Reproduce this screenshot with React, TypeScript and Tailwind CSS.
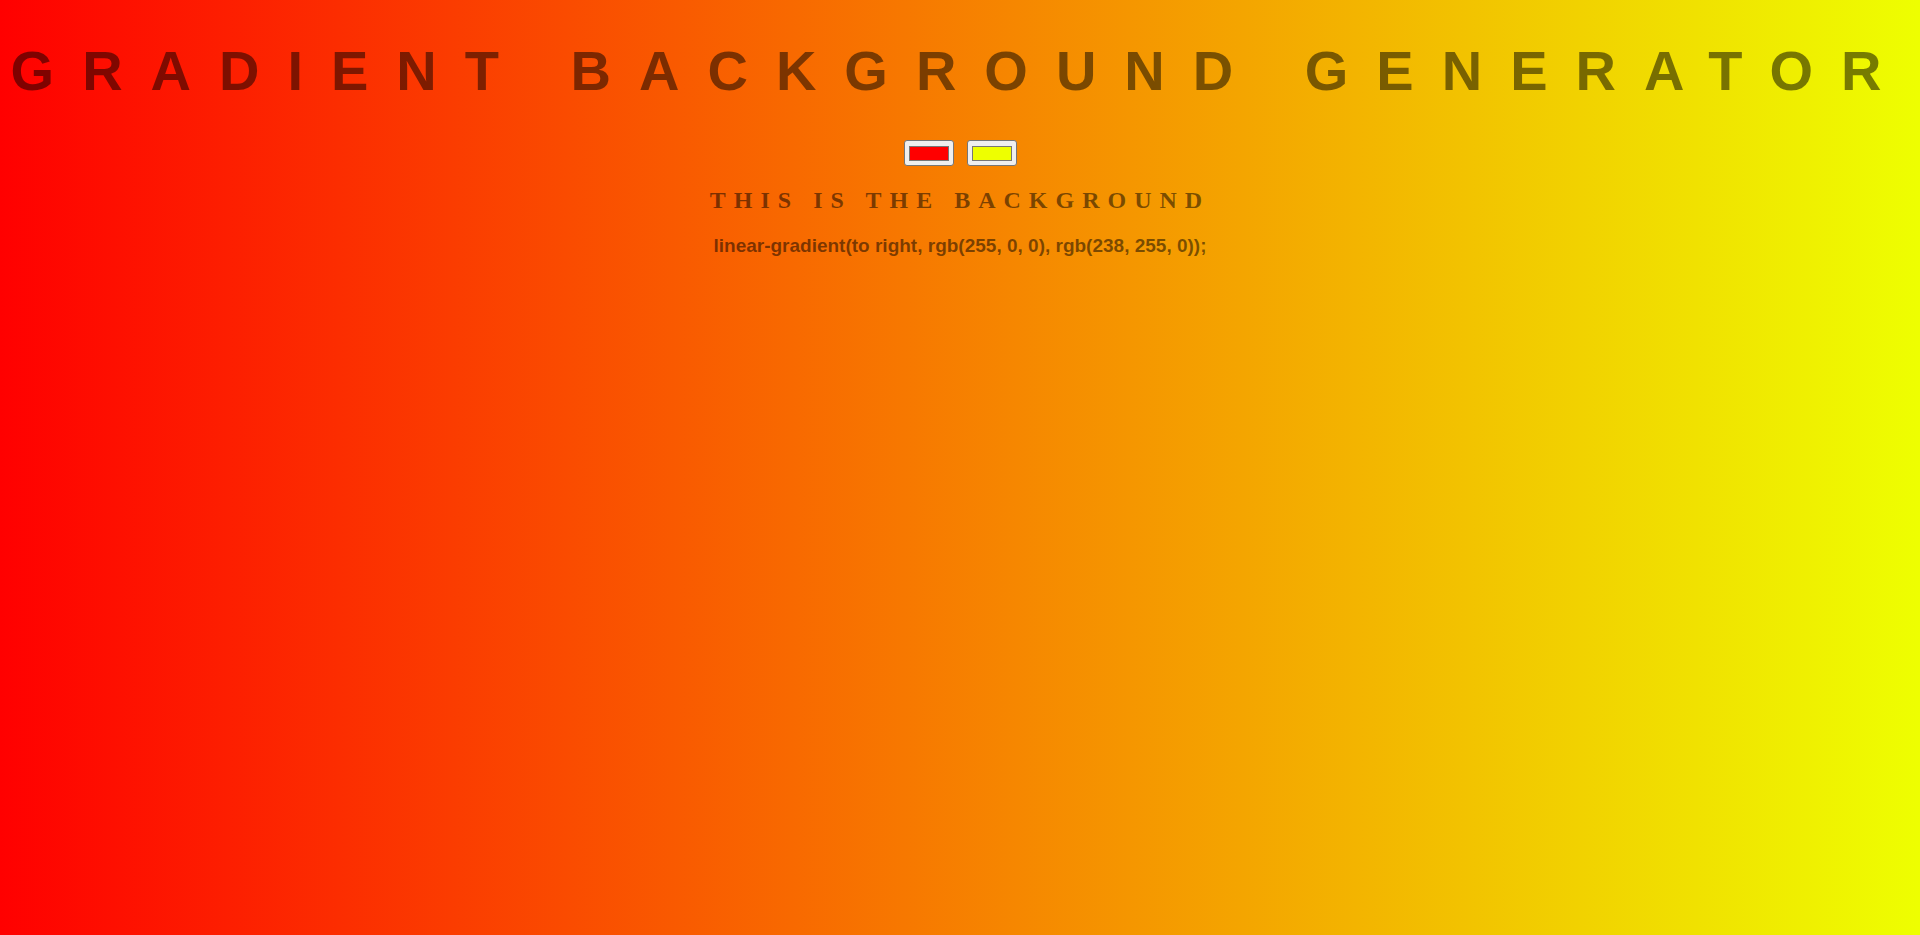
const colors = ["#ff0000", "#eeff00"];

function Swatch({ color }: { color: string }) {
  return (
    <div className="w-[50px] h-[26px] flex items-center justify-center bg-[#efefef] border border-[#767676] rounded-[3px]">
      <div className="w-[40px] h-[15px] border border-[#777777]" style={{ backgroundColor: color }}></div>
    </div>
  );
}

export default function App() {
  return (
    <div className="min-h-screen w-full bg-[linear-gradient(to_right,rgb(255,0,0),rgb(238,255,0))] flex flex-col items-center text-black/50">
      <h1 className="pt-[43px] w-full text-center whitespace-nowrap font-['Liberation_Sans',Arial,sans-serif] font-bold text-[56px] leading-none tracking-[28px]">
        GRADIENT BACKGROUND GENERATOR
      </h1>
      <div className="mt-[41px] flex gap-[13px]">
        {colors.map((c) => (
          <Swatch key={c} color={c} />
        ))}
      </div>
      <h3 className="mt-[22px] font-['Liberation_Serif','Times_New_Roman',serif] font-bold text-[24px] leading-none tracking-[8px] whitespace-nowrap">
        THIS IS THE BACKGROUND
      </h3>
      <h3 className="mt-[24px] font-['Liberation_Sans',Arial,sans-serif] font-bold text-[19px] leading-none whitespace-nowrap">
        linear-gradient(to right, rgb(255, 0, 0), rgb(238, 255, 0));
      </h3>
    </div>
  );
}
